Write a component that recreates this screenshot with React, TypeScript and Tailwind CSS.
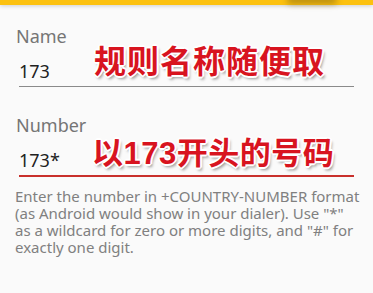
import React from 'react';

const outline =
  '[text-shadow:1px_1px_0_#fff,-1px_-1px_0_#fff,1px_-1px_0_#fff,-1px_1px_0_#fff,2px_0_0_#fff,-2px_0_0_#fff,0_2px_0_#fff,0_-2px_0_#fff,2px_3px_3px_rgba(0,0,0,0.4)]';

const helpLines = [
  'Enter the number in +COUNTRY-NUMBER format',
  '(as Android would show in your dialer). Use "*"',
  'as a wildcard for zero or more digits, and "#" for',
  'exactly one digit.',
];

function Field({
  label,
  value,
  focused,
  note,
}: {
  label: string;
  value: string;
  focused?: boolean;
  note: React.ReactNode;
}) {
  return (
    <div className="relative">
      <div className="pl-4 text-[18px] leading-[24px] text-[#757575]">{label}</div>
      <div className="mx-[19px] mt-[11px]">
        <div className="h-[24px] text-[18px] leading-[24px] text-[#212121]">{value}</div>
        <div className={focused ? 'mt-[3px] h-[2px] bg-[#c9302c]' : 'mt-[3px] h-px bg-[#8a8a8a]'} />
      </div>
      {note}
    </div>
  );
}

export default function App() {
  return (
    <div className="relative h-[293px] w-[373px] overflow-hidden bg-[#fafafa] font-['Noto_Sans',sans-serif]">
      <div className="relative h-[5px] bg-[#fcc10f] shadow-[0_1px_4px_rgba(0,0,0,0.18)]">
        <div className="absolute left-[287px] top-[-4px] h-[8px] w-[50px] rounded-full bg-[#8a6a10]/60 blur-[3px]" />
      </div>

      <div className="pt-[19px]">
        <Field
          label="Name"
          value="173"
          note={
            <div
              className={`absolute left-[94px] top-[17px] text-[32px] leading-[36px] font-bold tracking-[1px] text-[#d8141f] font-['Noto_Sans_CJK_SC',sans-serif] ${outline}`}
            >
              规则名称随便取
            </div>
          }
        />
        <div className="h-[26px]" />
        <Field
          label="Number"
          value="173*"
          focused
          note={
            <div
              className={`absolute left-[92px] top-[21px] text-[31px] leading-[34px] font-bold tracking-[0.5px] text-[#d8141f] font-['Noto_Sans_CJK_SC',sans-serif] ${outline}`}
            >
              以<span className="font-['Liberation_Sans',sans-serif]">173</span>开头的号码
            </div>
          }
        />
        <div className="mt-[11px] pl-[15px] text-[15px] leading-[17px] text-[#808080]">
          {helpLines.map((line) => (
            <div key={line} className="whitespace-nowrap">
              {line}
            </div>
          ))}
        </div>
      </div>
    </div>
  );
}
